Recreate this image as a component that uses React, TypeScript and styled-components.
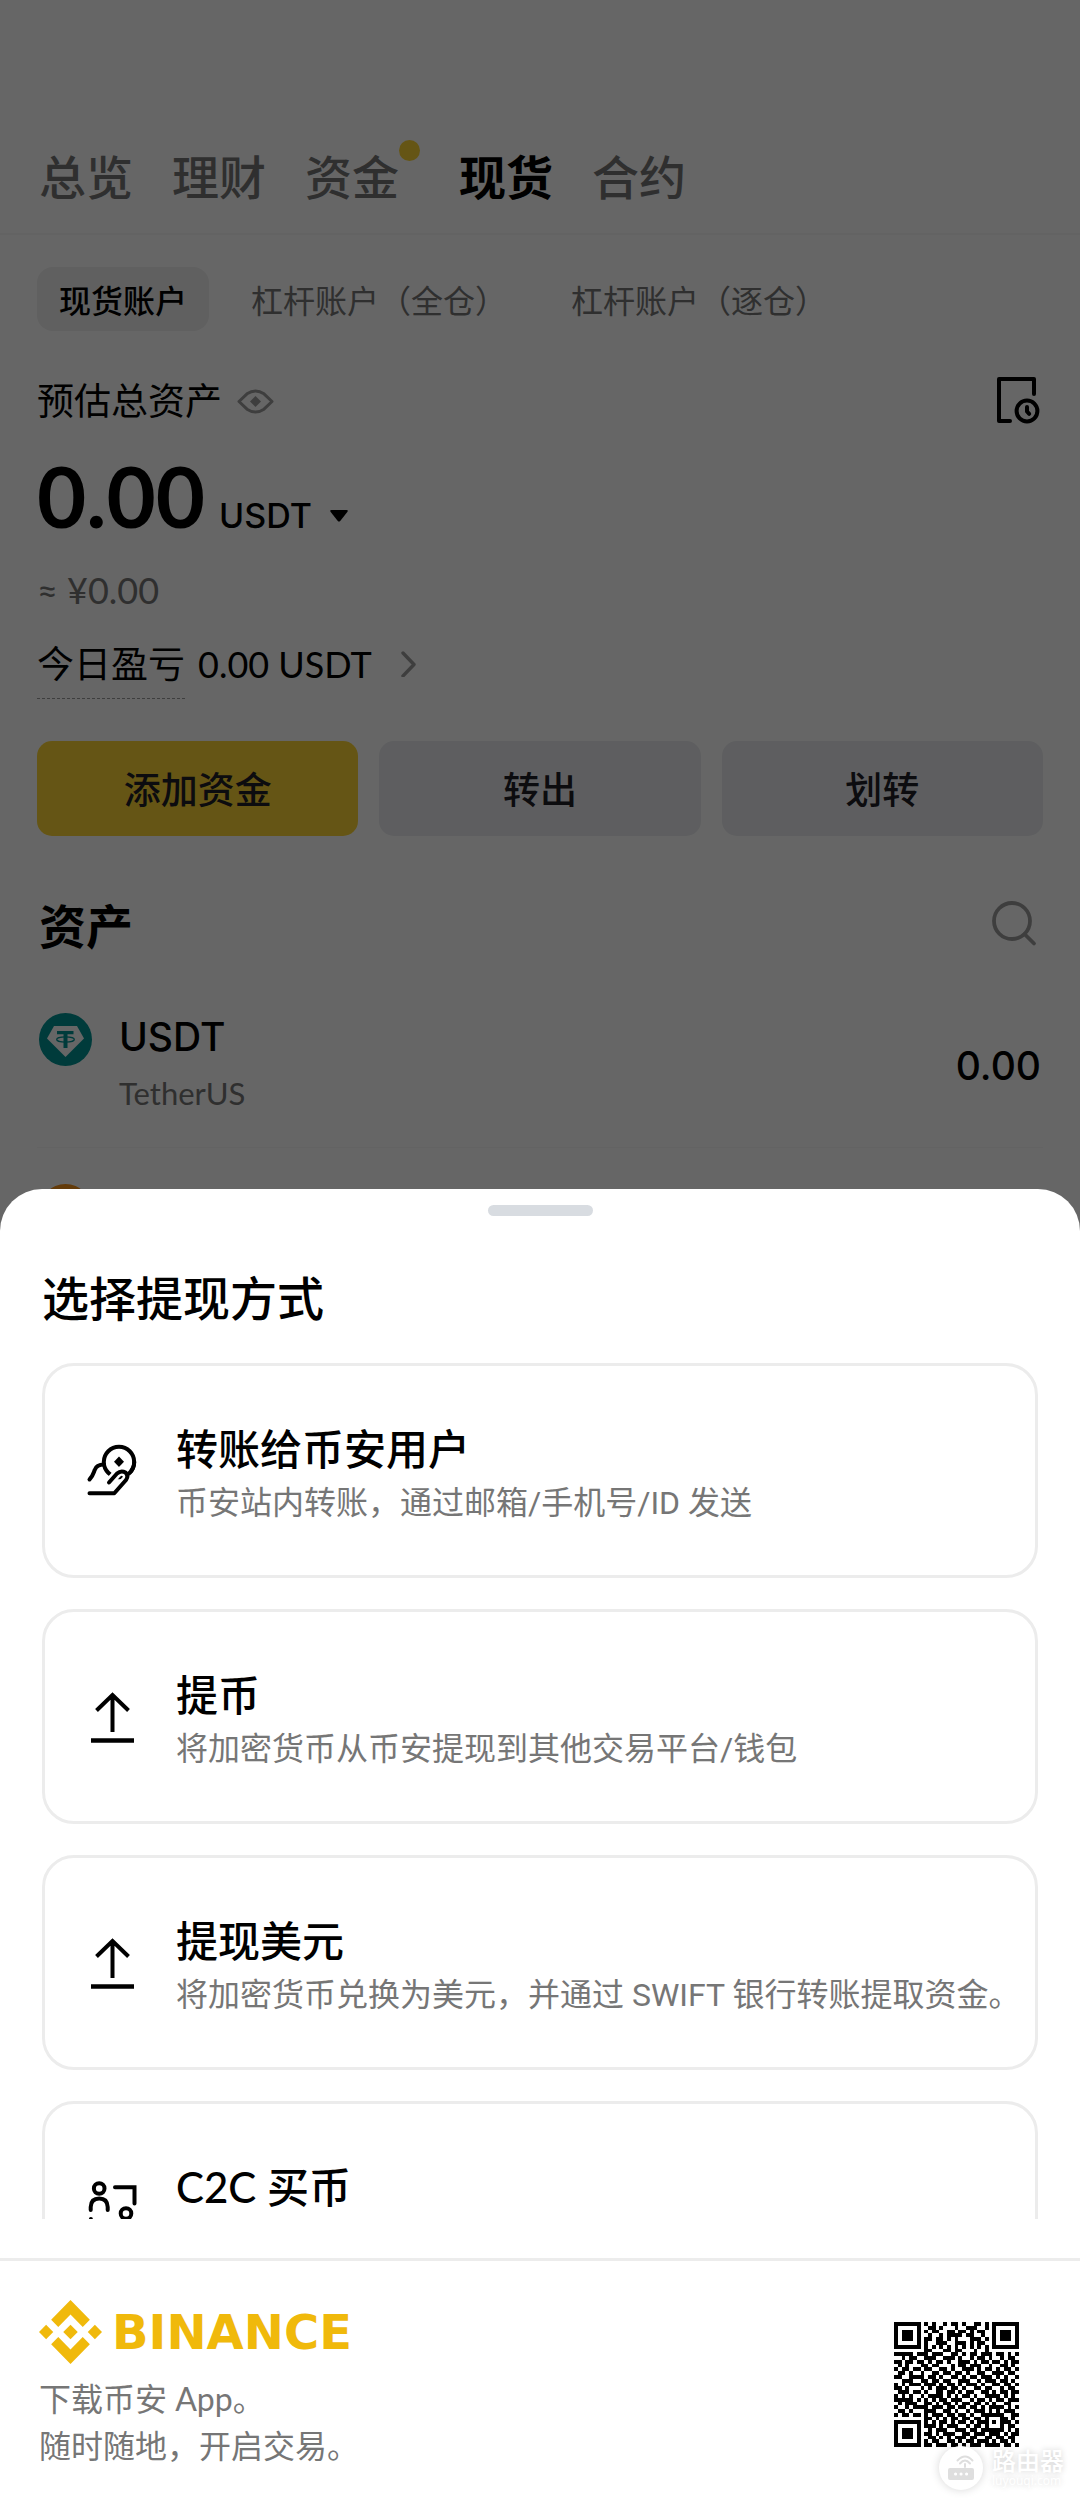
import React from "react";
import styled, { createGlobalStyle } from "styled-components";

const fontStack = `Lato, "Noto Sans CJK SC", sans-serif`;
const numberStack = `Inter, "Noto Sans CJK SC", sans-serif`;
const bodyStack = `Roboto, "Noto Sans CJK SC", sans-serif`;

const colors = {
  text: "#000000",
  buttonText: "#1e2026",
  muted: "#767676",
  icon: "#9c9c9c",
  brand: "#f0b90b",
  primary: "#fcd535",
  secondary: "#eaecef",
  pill: "#f0f0f0",
  line: "#ececec",
  hairline: "#f7f7f7",
};

const GlobalStyle = createGlobalStyle`
  *, *::before, *::after { box-sizing: border-box; }
  body { margin: 0; background: #fff; font-family: ${fontStack}; color: ${colors.text}; }
  h1, h2, h3, p, ul { margin: 0; padding: 0; }
  ul { list-style: none; }
  button { font: inherit; color: inherit; border: 0; padding: 0; background: none; cursor: pointer; }
  svg { display: block; flex: none; }
`;

const Root = styled.div`
  min-height: 100vh;
  display: flex;
  flex-direction: column;
`;

const Screen = styled.div`
  flex: 1;
  display: grid;
  grid-template: 1fr / 1fr;
`;

const Account = styled.main`
  grid-area: 1 / 1;
  height: 0;
  min-height: 100%;
  overflow: hidden;
`;

const Scrim = styled.div`
  grid-area: 1 / 1;
  z-index: 1;
  display: flex;
  flex-direction: column;
  justify-content: flex-end;
  background: rgba(0, 0, 0, 0.6);
`;

const Tabs = styled.nav`
  display: flex;
  gap: 39px;
  padding: 145px 39px 24px;
  border-bottom: 2px solid ${colors.hairline};
`;

const Tab = styled.button<{ $active?: boolean; $badge?: boolean }>`
  position: relative;
  margin-right: ${(p) => (p.$badge ? "21px" : "0")};
  font-size: 47px;
  line-height: 64px;
  font-weight: ${(p) => (p.$active ? 700 : 500)};
  color: ${(p) => (p.$active ? colors.text : colors.muted)};
`;

const Badge = styled.span`
  position: absolute;
  left: 100%;
  top: -5px;
  width: 21px;
  height: 21px;
  border-radius: 50%;
  background: ${colors.primary};
`;

const Body = styled.div`
  padding: 32px 37px 0;
`;

const Pills = styled.div`
  display: flex;
  gap: 20px;
`;

const Pill = styled.button<{ $active?: boolean }>`
  padding: 3px 22px 0;
  border-radius: 16px;
  font-size: 32px;
  line-height: 61px;
  font-weight: ${(p) => (p.$active ? 500 : 400)};
  white-space: nowrap;
  color: ${(p) => (p.$active ? colors.text : colors.muted)};
  background: ${(p) => (p.$active ? colors.pill : "transparent")};
`;

const Row = styled.div`
  display: flex;
  align-items: center;
  justify-content: space-between;
`;

const SummaryRow = styled(Row)`
  margin-top: 46px;
  padding-right: 3px;
`;

const Label = styled.div`
  display: flex;
  align-items: center;
  gap: 15px;
  font-size: 37px;
  line-height: 48px;
`;

const Amount = styled.div`
  display: flex;
  align-items: baseline;
  gap: 14px;
  margin-top: 20px;
  font-size: 85px;
  line-height: 100px;
  font-weight: 700;
`;

const Unit = styled.button`
  display: flex;
  align-items: center;
  gap: 18px;
  font-family: ${numberStack};
  font-size: 34px;
  line-height: 48px;
  font-weight: 500;
`;

const Approx = styled.p`
  margin-top: 21px;
  font-size: 36px;
  line-height: 48px;
  color: ${colors.muted};
`;

const Pnl = styled.div`
  display: flex;
  align-items: flex-start;
  gap: 13px;
  margin-top: 26px;
  font-size: 36px;
  line-height: 48px;
`;

const PnlLabel = styled.span`
  padding-bottom: 10px;
  border-bottom: 1px dashed ${colors.icon};
  font-size: 37px;
`;

const PnlLink = styled.button`
  display: flex;
  align-items: center;
  gap: 29px;
`;

const Actions = styled.div`
  display: grid;
  grid-template-columns: repeat(3, 1fr);
  gap: 21px;
  margin-top: 42px;
`;

const Action = styled.button<{ $primary?: boolean }>`
  height: 95px;
  padding-bottom: 2px;
  border-radius: 15px;
  font-size: 37px;
  font-weight: 500;
  color: ${colors.buttonText};
  background: ${(p) => (p.$primary ? colors.primary : colors.secondary)};
`;

const AssetsHeader = styled(Row)`
  margin: 58px 0 19px;
  padding: 0 6px 0 2px;
`;

const AssetsTitle = styled.h2`
  font-size: 47px;
  line-height: 64px;
  font-weight: 700;
`;

const Asset = styled.li`
  display: flex;
  align-items: center;
  padding: 32px 2px 26px;
  border-bottom: 1px solid ${colors.hairline};
`;

const AssetIcon = styled.div`
  align-self: flex-start;
  margin: 4px 27px 0 0;
`;

const AssetText = styled.div`
  flex: 1;
  line-height: 56px;
`;

const AssetName = styled.h3`
  font-family: ${numberStack};
  font-size: 39px;
  font-weight: 500;
`;

const AssetSub = styled.p`
  font-size: 31px;
  color: ${colors.muted};
`;

const AssetValue = styled.span`
  font-family: ${numberStack};
  font-size: 39px;
  font-weight: 500;
`;

const Sheet = styled.section`
  display: flex;
  flex-direction: column;
  max-height: 1069px;
  padding: 16px 42px 39px;
  border-radius: 42px 42px 0 0;
  background: #fff;
`;

const Handle = styled.div`
  align-self: center;
  flex: none;
  width: 105px;
  height: 11px;
  border-radius: 6px;
  background: #d8dce1;
`;

const SheetTitle = styled.h2`
  margin: 50px 0 33px;
  font-size: 47px;
  line-height: 64px;
  font-weight: 500;
`;

const Methods = styled.ul`
  flex: 1;
  min-height: 0;
  display: flex;
  flex-direction: column;
  gap: 31px;
  overflow-y: auto;
  scrollbar-width: none;
`;

const Method = styled.button`
  display: flex;
  align-items: center;
  gap: 36px;
  width: 100%;
  height: 215px;
  padding: 0 0 0 41px;
  border: 3px solid ${colors.line};
  border-radius: 32px;
  text-align: left;
`;

const MethodTitle = styled.h3`
  font-size: 42px;
  line-height: 64px;
  font-weight: 500;
`;

const MethodText = styled.p`
  font-family: ${bodyStack};
  font-size: 32px;
  line-height: 44px;
  color: ${colors.muted};
  white-space: nowrap;
`;

const Footer = styled.footer`
  position: relative;
  flex: none;
  display: flex;
  align-items: flex-start;
  justify-content: space-between;
  height: 250px;
  padding: 39px 61px 0 39px;
  border-top: 3px solid ${colors.line};
`;

const Brand = styled.div`
  display: flex;
  align-items: center;
  gap: 10px;
  height: 64px;
  margin-bottom: 11px;
  font-family: "DejaVu Sans", sans-serif;
  font-size: 48px;
  font-weight: 700;
  color: ${colors.brand};
`;

const Slogan = styled.p`
  font-size: 32px;
  line-height: 47px;
  color: ${colors.muted};
`;

const QrBox = styled.div`
  padding-top: 22px;
`;

const Watermark = styled.div`
  position: absolute;
  right: 16px;
  bottom: 18px;
  display: flex;
  align-items: center;
  gap: 9px;
  color: #fff;
  text-shadow: 0 0 6px rgba(0, 0, 0, 0.2);
`;

const WatermarkDisc = styled.div`
  display: grid;
  place-items: center;
  width: 44px;
  height: 44px;
  border-radius: 50%;
  background: #fff;
  box-shadow: 0 0 10px rgba(0, 0, 0, 0.16);
`;

const WatermarkName = styled.div`
  font-size: 24px;
  line-height: 26px;
  font-weight: 500;
`;

const WatermarkSite = styled.div`
  font-family: "Noto Sans", sans-serif;
  font-size: 12px;
  line-height: 14px;
`;

const EyeIcon = () => (
  <svg width="37" height="25" viewBox="0 0 37 25" fill="none" stroke={colors.icon} strokeWidth="3" strokeLinejoin="round">
    <path d="M2 12.5 10 4.8Q18.5-.8 27 4.8L35 12.5 27 20.2Q18.5 25.8 10 20.2Z" />
    <path d="M18.5 7 24 12.5 18.5 18 13 12.5Z" fill={colors.icon} stroke="none" />
  </svg>
);

const HistoryIcon = () => (
  <svg width="44" height="48" viewBox="0 1 44 48" fill="none" stroke="#000" strokeWidth="4" strokeLinecap="round" strokeLinejoin="round">
    <path d="M38 18V3H3V45H14" />
    <circle cx="31" cy="35" r="10.4" />
    <path d="M31 31v4.5l2.2 2.4" />
  </svg>
);

const CaretIcon = () => (
  <svg width="18" height="12" viewBox="0 0 18 12">
    <path d="M1.5 0H16.5Q18.6 0 17.3 1.9L10.2 11Q9 12.2 7.8 11L.7 1.9Q-.6 0 1.5 0Z" />
  </svg>
);

const ChevronIcon = () => (
  <svg width="15" height="26" viewBox="0 -2 15 26" fill="none" stroke={colors.icon} strokeWidth="3.4" strokeLinecap="round" strokeLinejoin="round">
    <path d="M2 0 13 11.500 2 23" />
  </svg>
);

const SearchIcon = () => (
  <svg width="46" height="52" viewBox="0 0 46 52" fill="none" stroke={colors.icon} strokeWidth="3.8" strokeLinecap="round">
    <circle cx="21" cy="21" r="18" />
    <path d="M33.5 34 43 43.5" />
  </svg>
);

const TetherIcon = () => (
  <svg width="53" height="53" viewBox="0 0 53 53">
    <circle cx="26.500" cy="26.500" r="26.500" fill="#009393" />
    <path d="M15 13H38L45 25.500 26.500 44 8 25.500Z" fill="#fff" />
    <path d="M18 18H34.500V21.200H28.500V35H24.500V21.200H18Z" fill="#009393" />
    <ellipse cx="26.500" cy="26.500" rx="8.800" ry="2.600" fill="none" stroke="#009393" strokeWidth="1.300" />
  </svg>
);

const BitcoinIcon = () => (
  <svg width="53" height="53" viewBox="0 0 53 53">
    <circle cx="26.500" cy="26.500" r="26.500" fill="#f7931a" />
  </svg>
);

const MethodSvg = ({ children }: { children: React.ReactNode }) => (
  <svg width="54" height="58" viewBox="0 0 54 58" fill="none" stroke="#000" strokeWidth="4" strokeLinecap="round" strokeLinejoin="round">
    {children}
  </svg>
);

const SendIcon = () => (
  <MethodSvg>
    <circle cx="33" cy="20" r="15.200" />
    <path d="M33 14.500 38 19.800 33 25 28 19.800Z" fill="#000" stroke="none" />
    <path d="M22.500 41 31 31.500Q35 27.500 39.500 30.500Q43 34 40 38L28.300 51.300H3.500" stroke="#fff" strokeWidth="9" strokeLinecap="butt" />
    <path d="M3.500 37.500C7 34 7.500 31 8.800 27.800Q10.500 22.500 18 22.500" />
    <path d="M23 40.500 31 31.500Q35 28 39.500 30.500Q43 34 40 38L28.300 51.300H3.500" />
    <path d="M43 31.500Q48.200 26.500 48.200 20" />
  </MethodSvg>
);

const UploadIcon = () => (
  <MethodSvg>
    <path d="M26.500 7V44M10.500 22.500 26.500 7 42.500 22.500" strokeLinecap="butt" strokeLinejoin="miter" />
    <path d="M5 52.500H48" strokeLinecap="butt" strokeWidth="4.500" />
  </MethodSvg>
);

const PeerIcon = () => (
  <MethodSvg>
    <circle cx="13.200" cy="8.500" r="5.300" />
    <path d="M4.700 30V27Q5 18.500 13.200 18.500T21.700 27V30" />
    <path d="M29 7.200H48.500V23.500" strokeLinejoin="miter" />
    <circle cx="40" cy="33.500" r="5.300" />
    <path d="M31.500 55V52Q31.800 43.500 40 43.500T48.500 52V55" />
    <path d="M4.900 39V53H24" strokeLinejoin="miter" />
  </MethodSvg>
);

const BinanceMark = () => (
  <svg width="63" height="64" viewBox="0 0 126.610 126.610" fill={colors.brand} preserveAspectRatio="none">
    <path d="M38.730 53.200 63.310 28.620 87.900 53.210 102.200 38.910 63.310 0 24.430 38.900Z" />
    <path d="M0 63.310 14.300 49.010 28.600 63.310 14.300 77.610Z" />
    <path d="M38.730 73.410 63.310 98 87.900 73.400 102.210 87.690 63.310 126.610 24.410 87.710Z" />
    <path d="M98 63.310 112.300 49.010 126.610 63.310 112.300 77.620Z" />
    <path d="M77.830 63.300 63.310 48.780 48.780 63.300 63.310 77.830Z" />
  </svg>
);

const qrRows = [
  "111111101010010110100110101111111",
  "100000100110100010011100101000001",
  "101110101011001101101011001011101",
  "101110100100101111011001001011101",
  "101110101101101010001110101011101",
  "100000101001110011101011001000001",
  "111111101010101010101010101111111",
  "000000001100011011000100100000000",
  "111110111011100110101101110110101",
  "001011001110011101001011010010110",
  "110110110101101001110101101101011",
  "010100011011000101101110010011010",
  "101101101100110100111010110101101",
  "011010010011011011010011001110110",
  "110011110110100110101101110101001",
  "001110011011011001110010111011010",
  "101011101110101101011101001101101",
  "110100010101110110100110110010110",
  "011101101001101101011001101011011",
  "101010010111101010110100111101010",
  "111110101010110111001011010110111",
  "010111001101011010110110101001100",
  "100101111011101101101101011110101",
  "011010001110011010010111010101110",
  "101101101011101101101001111110011",
  "000000001101010110110110100011010",
  "111111101010110101101011101011101",
  "100000101110101110010110100010110",
  "101110100101110011101101111110101",
  "101110101101011100110111011101011",
  "101110100110101011101100110110110",
  "100000101011001101011011101011010",
  "111111101101110110101110111101101",
];

const qrPath = qrRows
  .map((row, y) => [...row].map((cell, x) => (cell === "1" ? `M${x} ${y}h1v1h-1z` : "")).join(""))
  .join("");

const QrCode = () => (
  <svg width="125" height="125" viewBox="0 0 33 33" shapeRendering="crispEdges" role="img" aria-label="QR">
    <path d={qrPath} />
  </svg>
);

const RouterIcon = () => (
  <svg width="28" height="26" viewBox="0 0 28 26" fill="none" stroke="#dedede" strokeWidth="2" strokeLinecap="round">
    <rect x="1" y="13" width="26" height="12" rx="2" fill="#dedede" stroke="none" />
    <path d="M18 12V9M13 8.500Q18 2.500 23 8.500M10.500 5.500Q18-2.500 25.500 5.500" />
    <path d="M8.500 19h.1M14 19h.1M19.500 19h.1" stroke="#fff" strokeWidth="3" />
  </svg>
);

const tabs = [
  { name: "总览" },
  { name: "理财" },
  { name: "资金", badge: true },
  { name: "现货", active: true },
  { name: "合约" },
];

const accounts = ["现货账户", "杠杆账户（全仓）", "杠杆账户（逐仓）"];

const methods = [
  { title: "转账给币安用户", text: "币安站内转账，通过邮箱/手机号/ID 发送", Icon: SendIcon },
  { title: "提币", text: "将加密货币从币安提现到其他交易平台/钱包", Icon: UploadIcon },
  { title: "提现美元", text: "将加密货币兑换为美元，并通过 SWIFT 银行转账提取资金。", Icon: UploadIcon },
  { title: "C2C 买币", text: "", Icon: PeerIcon },
];

export default function App() {
  return (
    <Root lang="zh-CN">
      <GlobalStyle />
      <Screen>
        <Account>
          <Tabs>
            {tabs.map((t) => (
              <Tab key={t.name} $active={t.active} $badge={t.badge}>
                {t.name}
                {t.badge && <Badge />}
              </Tab>
            ))}
          </Tabs>
          <Body>
            <Pills>
              {accounts.map((name, i) => (
                <Pill key={name} $active={i === 0}>{name}</Pill>
              ))}
            </Pills>
            <SummaryRow>
              <Label>
                预估总资产
                <button aria-label="显示或隐藏"><EyeIcon /></button>
              </Label>
              <button aria-label="历史记录"><HistoryIcon /></button>
            </SummaryRow>
            <Amount>
              0.00
              <Unit>USDT <CaretIcon /></Unit>
            </Amount>
            <Approx>≈ ¥0.00</Approx>
            <Pnl>
              <PnlLabel>今日盈亏</PnlLabel>
              <PnlLink>0.00 USDT <ChevronIcon /></PnlLink>
            </Pnl>
            <Actions>
              <Action $primary>添加资金</Action>
              <Action>转出</Action>
              <Action>划转</Action>
            </Actions>
            <AssetsHeader>
              <AssetsTitle>资产</AssetsTitle>
              <button aria-label="搜索"><SearchIcon /></button>
            </AssetsHeader>
            <ul>
              <Asset>
                <AssetIcon><TetherIcon /></AssetIcon>
                <AssetText>
                  <AssetName>USDT</AssetName>
                  <AssetSub>TetherUS</AssetSub>
                </AssetText>
                <AssetValue>0.00</AssetValue>
              </Asset>
              <Asset>
                <AssetIcon><BitcoinIcon /></AssetIcon>
              </Asset>
            </ul>
          </Body>
        </Account>
        <Scrim>
          <Sheet role="dialog" aria-labelledby="sheet-title">
            <Handle />
            <SheetTitle id="sheet-title">选择提现方式</SheetTitle>
            <Methods>
              {methods.map(({ title, text, Icon }) => (
                <li key={title}>
                  <Method>
                    <Icon />
                    <div>
                      <MethodTitle>{title}</MethodTitle>
                      <MethodText>{text || "\u00a0"}</MethodText>
                    </div>
                  </Method>
                </li>
              ))}
            </Methods>
          </Sheet>
        </Scrim>
      </Screen>
      <Footer>
        <div>
          <Brand><BinanceMark />BINANCE</Brand>
          <Slogan>下载币安 App。<br />随时随地，开启交易。</Slogan>
        </div>
        <QrBox><QrCode /></QrBox>
        <Watermark>
          <WatermarkDisc><RouterIcon /></WatermarkDisc>
          <div>
            <WatermarkName>路由器</WatermarkName>
            <WatermarkSite>luyouqi.com</WatermarkSite>
          </div>
        </Watermark>
      </Footer>
    </Root>
  );
}
